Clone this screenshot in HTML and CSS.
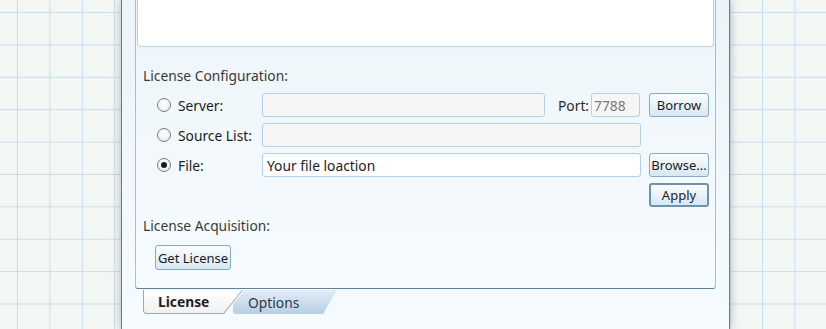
FILE: index.html
```html
<!DOCTYPE html>
<html lang="en">
<head>
    <meta charset="UTF-8">
    <meta name="viewport" content="width=device-width, initial-scale=1.0">
    <title>License Manager</title>
    <link rel="stylesheet" href="styles.css">
</head>
<body>

    <div class="window">
        <div class="panel">
            <div class="log"></div>

            <div class="panel-body">
                <div class="section-title">License Configuration:</div>

                <div class="config">
                    <label class="opt"><span class="radio"></span>Server:</label>
                    <div class="server-cell">
                        <input type="text" class="field server" disabled>
                        <span class="port-label">Port:</span>
                        <input type="text" class="field port" value="7788" disabled>
                    </div>
                    <button class="btn">Borrow</button>

                    <label class="opt"><span class="radio"></span>Source List:</label>
                    <input type="text" class="field" disabled>
                    <span></span>

                    <label class="opt"><span class="radio checked"></span>File:</label>
                    <input type="text" class="field file" value="Your file loaction">
                    <button class="btn">Browse...</button>

                    <span></span>
                    <span></span>
                    <button class="btn default">Apply</button>
                </div>

                <div class="section-title second">License Acquisition:</div>
                <button class="btn get-license">Get License</button>
            </div>
        </div>

        <div class="tabs">
            <div class="tab active"><span>License</span></div>
            <div class="tab"><span>Options</span></div>
        </div>
    </div>

</body>
</html>
```

FILE: styles.css
```css
* {
    box-sizing: border-box;
    margin: 0;
    padding: 0;
}
body {
    font-family: 'Noto Sans', 'Open Sans', sans-serif;
    font-size: 13.8px;
    color: #1c1c1c;
    height: 329px;
    overflow: hidden;
    background-color: #f3f7f3;
    background-image:
        linear-gradient(to right, #c6ddf3 1px, transparent 1px),
        linear-gradient(to bottom, #c6ddf3 1px, transparent 1px);
    background-size: 32.4px 32.4px;
    background-position: 17px 12px;
}
.window {
    margin-left: 121px;
    width: 609px;
    height: 329px;
    padding: 0 13px;
    border-left: 1px solid #2e89df;
    border-right: 1px solid #2e89df;
    background: linear-gradient(to bottom, #edf4f9, #f5fbff);
    box-shadow: 0 0 9px rgba(0, 0, 0, 0.28);
}
.panel {
    height: 289px;
    padding: 0 1px;
    border: 1px solid #a8bfd1;
    border-top: none;
    border-bottom-color: #5f819c;
    border-radius: 0 0 3px 3px;
    background: linear-gradient(to bottom, #eef5fa, #f5fbfe);
}
.log {
    height: 47px;
    background: #fff;
    border: 1px solid #b7d3ea;
    border-top: none;
    border-radius: 0 0 4px 4px;
}
.panel-body {
    padding-left: 6px;
}
.section-title {
    margin-top: 20px;
    line-height: 18px;
    height: 18px;
    color: #3a3a3a;
}
.section-title.second {
    margin-top: 10px;
}
.config {
    margin: 8px 0 0 14px;
    display: grid;
    grid-template-columns: 97px 379px 60px;
    grid-auto-rows: 24px;
    column-gap: 8px;
    row-gap: 6px;
}
.opt {
    display: flex;
    align-items: center;
    gap: 7px;
}
.radio {
    width: 14px;
    height: 14px;
    border-radius: 50%;
    border: 1px solid #7b7b7b;
    background: radial-gradient(circle at 50% 40%, #ffffff, #e6e6e6);
    display: flex;
    align-items: center;
    justify-content: center;
}
.radio.checked::after {
    content: '';
    width: 6px;
    height: 6px;
    border-radius: 50%;
    background: #1a1a1a;
}
.field {
    height: 24px;
    width: 100%;
    border: 1px solid #b4d0e7;
    border-radius: 3px;
    background: #f6f6f6;
    font-family: inherit;
    font-size: 13.8px;
    color: #1c1c1c;
    padding: 0 4px;
    outline: none;
}
.field.file {
    background: #fff;
}
.server-cell {
    display: flex;
    align-items: center;
}
.field.server {
    width: 283px;
}
.port-label {
    margin: 0 2px 0 13px;
    color: #2a2a2a;
}
.field.port {
    width: 49px;
    padding: 0 2px;
    color: #7a7a7a;
}
.btn {
    height: 24px;
    width: 60px;
    font-family: inherit;
    font-size: 13px;
    color: #1c1c1c;
    border: 1px solid #8aaac4;
    border-radius: 3px;
    background: linear-gradient(to bottom, #fbfdff, #e9f2f9 50%, #d6e7f4);
    cursor: pointer;
}
.btn.default {
    border: 2px solid #6b93b0;
}
.get-license {
    margin: 10px 0 0 12px;
    width: 76px;
    height: 25px;
}
.tabs {
    display: flex;
    margin: 1px 0 0 8px;
    height: 24px;
}
.tab {
    height: 24px;
    width: 104px;
    margin-left: -10px;
    clip-path: polygon(12px 0, 100% 0, calc(100% - 14px) 100%, 0 100%, 0 14px);
    border-radius: 0 0 0 3px;
    background: linear-gradient(to bottom, #e2edf6, #b7cfe3);
    color: #2f3a44;
    display: flex;
    align-items: center;
    padding-left: 15px;
}
.tab.active {
    margin-left: 0;
    width: 100px;
    z-index: 1;
    padding: 0 0 1px 1px;
    clip-path: polygon(0 0, 100px 0, 81px 100%, 0 100%);
    background: #a0a8ae;
    border-radius: 0 0 0 4px;
}
.tab.active span {
    flex: 1;
    height: 100%;
    display: flex;
    align-items: center;
    padding-left: 14px;
    font-weight: bold;
    color: #1f1f1f;
    background: linear-gradient(to bottom, #ffffff, #f1f1f1);
    clip-path: polygon(0 0, 98px 0, 79.5px 100%, 0 100%);
    border-radius: 0 0 0 3px;
}
```
